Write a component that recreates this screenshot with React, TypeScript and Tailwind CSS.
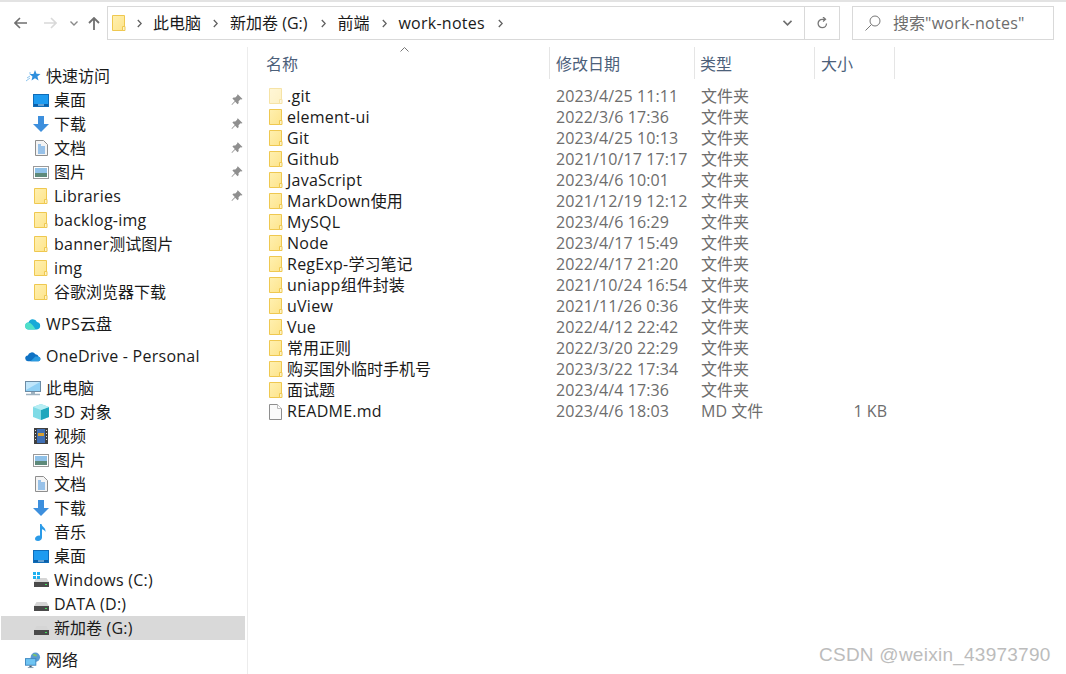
import React from "react";

const Folder = ({ pale = false }: { pale?: boolean }) => (
  <svg width="14" height="17" viewBox="0 0 14 17" className={pale ? "shrink-0 opacity-50" : "shrink-0"}>
    <defs>
      <linearGradient id="fg" x1="0" y1="0" x2="1" y2="1">
        <stop offset="0" stopColor="#fff0b0" />
        <stop offset="1" stopColor="#fde48c" />
      </linearGradient>
    </defs>
    <path d="M.5.5h12v15H.5z" fill="url(#fg)" stroke="#efc850" />
    <path d="M10.5 15.5v-4h2.500v4z" fill="#fdf3c8" stroke="#efc850" />
  </svg>
);

const Pin = () => (
  <svg width="12" height="12" viewBox="0 0 12 12" className="shrink-0">
    <path d="M7 .5l4.500 4.500-1.200.6-.8-.3-2 2 .2 1.800-1.100 1.100-2.400-2.400L1 11l-.5-.5 3.300-3.600L1.400 4.500l1.100-1.100 1.800.2 2-2-.3-.8z" fill="#8f8f8f" />
  </svg>
);

const Desktop = () => (
  <svg width="16" height="13" viewBox="0 0 16 13"><rect x=".5" y=".5" width="15" height="12" fill="#1e9bf0" stroke="#0f6cb8" /><rect x="1" y="10" width="14" height="2" fill="#0a5fa8" /><rect x="5" y="10.500" width="6" height="1" fill="#bfe3fb" /></svg>
);
const Down = () => (
  <svg width="16" height="16" viewBox="0 0 16 16"><path d="M5 0h6v8h5l-8 8-8-8h5z" fill="#3d8fdd" /></svg>
);
const Doc = () => (
  <svg width="13" height="16" viewBox="0 0 13 16"><path d="M.5.500h8l4 4v11H.5z" fill="#f4f4f4" stroke="#8e8e8e" /><path d="M3 5h3M3 7h7M3 9h7M3 11h7M3 13h7" stroke="#3d8fdd" /></svg>
);
const Pic = () => (
  <svg width="16" height="13" viewBox="0 0 16 13"><rect x=".5" y=".5" width="15" height="12" fill="#fff" stroke="#9a9a9a" /><rect x="2" y="2" width="12" height="5" fill="#8fc1e8" /><rect x="2" y="7" width="12" height="4" fill="#5e8a7a" /></svg>
);
const Star = () => (
  <svg width="15" height="14" viewBox="0 0 15 14"><path d="M9 1l1.500 3.800 4 .2-3.100 2.600 1.100 3.900L9 9.300 5.500 11.500l1-3.900L3.500 5h4z" fill="#2f8fdd" /><path d="M0 12l4-3M1 9l3-2M3 4h2" stroke="#8cc4ee" /></svg>
);
const Wps = () => (
  <svg width="16" height="12" viewBox="0 0 16 12"><path d="M4 11.500a3.500 3.500 0 0 1-.5-7A4.500 4.500 0 0 1 12 4a3.800 3.800 0 0 1 0 7.500z" fill="#17a9d8" /><path d="M4 11.500a3.500 3.500 0 0 1-.5-7c2 0 5 3 7 7z" fill="#4fe0c8" /></svg>
);
const OneDrive = () => (
  <svg width="17" height="11" viewBox="0 0 17 11"><path d="M3.500 10.500a3 3 0 0 1-.5-6A4.500 4.500 0 0 1 11 3a3.500 3.500 0 0 1 3.500 2.800A2.400 2.400 0 0 1 14.500 10.500z" fill="#0f72c4" /><path d="M6 10.500l5-5 3.500.3A2.400 2.400 0 0 1 14.500 10.500z" fill="#2a9be0" /></svg>
);
const Pc = () => (
  <svg width="16" height="15" viewBox="0 0 16 15"><rect x=".5" y=".5" width="15" height="10" fill="#8fd0f5" stroke="#6d8ca5" /><path d="M1 1h14L1 9z" fill="#c0e6fb" /><path d="M6 11h4v2H6z" fill="#9fb2c0" /><path d="M1 13.500h14" stroke="#9fb2c0" strokeWidth="1.500" /></svg>
);
const Cube = () => (
  <svg width="16" height="16" viewBox="0 0 16 16"><path d="M8 0l8 3v10l-8 3-8-3V3z" fill="#7fdbe6" /><path d="M8 6l8-3v10l-8 3z" fill="#1fa7bd" /><path d="M8 0l8 3-8 3-8-3z" fill="#b7eef4" /></svg>
);
const Video = () => (
  <svg width="14" height="16" viewBox="0 0 14 16"><rect width="14" height="16" fill="#404040" /><rect x="3" y="1" width="8" height="14" fill="#3f6fb5" /><path d="M4 5h6v3H4z" fill="#d8a030" /><path d="M1 2h1v1H1zM1 5h1v1H1zM1 8h1v1H1zM1 11h1v1H1zM12 2h1v1h-1zM12 5h1v1h-1zM12 8h1v1h-1zM12 11h1v1h-1z" fill="#ddd" /></svg>
);
const Music = () => (
  <svg width="12" height="17" viewBox="0 0 12 17"><path d="M5 0h1.500c.5 3 4.500 3.500 4 8-1-2-2.500-2.500-3.500-2.800V13.500C7 15.500 5 17 3 17c-1.800 0-3-1-3-2.300C0 13 2 11.500 4 11.500c.4 0 .7 0 1 .2z" fill="#2b9be8" /></svg>
);
const Drive = ({ win = false }: { win?: boolean }) => (
  <span className="relative flex h-4 w-4 items-end">
    {win && (
      <svg width="7" height="7" viewBox="0 0 7 7" className="absolute left-0 top-0"><path d="M0 0h3v3H0zM4 0h3v3H4zM0 4h3v3H0zM4 4h3v3H4z" fill="#1fb0f0" /></svg>
    )}
    <svg width="15" height="9" viewBox="0 0 15 9" className="ml-[1px] mb-[1px]"><path d="M2.500 0h10L15 4H0z" fill="#d5d5d5" /><rect y="4" width="15" height="5" fill="#4a4a4a" /><rect x="11" y="6" width="2" height="1" fill="#3fe05a" /></svg>
  </span>
);
const Net = () => (
  <svg width="17" height="17" viewBox="0 0 17 17"><circle cx="11" cy="5" r="5" fill="#5a9ad0" /><path d="M8 2c2-1 4 0 5 2-2 0-4 0-5-2z" fill="#7cc46a" /><rect x=".5" y="6.500" width="11" height="7" fill="#6fc4f2" stroke="#3d87c0" /><path d="M5 14h2v1.500H5zM3 16h6" stroke="#7f99ad" /></svg>
);

/* Latin runs are a little wider in the reference than the CJK runs allow for */
const Txt = ({ s }: { s: string }) => (
  <>
    {s.split(/([\x20-\x7e]+)/).filter(Boolean).map((run, i) =>
      /^[\x20-\x7e]+$/.test(run) ? (
        <span key={i} className="tracking-[0.25px]">{run}</span>
      ) : (
        <span key={i}>{run}</span>
      )
    )}
  </>
);

const rowCls = "flex h-6 items-center";

const Nav = ({ icon, label, pin = false, selected = false }: { icon: React.ReactNode; label: string; pin?: boolean; selected?: boolean }) => (
  <div className={`${rowCls} ml-px w-[244px] pl-8 pr-[2px] ${selected ? "bg-[#d9d9d9]" : ""}`}>
    <span className="flex w-4 shrink-0 items-center justify-center">{icon}</span>
    <span className="ml-[5px] flex-1 whitespace-nowrap"><Txt s={label} /></span>
    {pin && <Pin />}
  </div>
);

const Head = ({ icon, label, cls = "" }: { icon: React.ReactNode; label: string; cls?: string }) => (
  <div className={`${rowCls} ml-px pl-6 ${cls}`}>
    <span className="flex w-4 shrink-0 items-center justify-center">{icon}</span>
    <span className="ml-[5px] whitespace-nowrap"><Txt s={label} /></span>
  </div>
);

const files = [
  [".git", "2023/4/25 11:11"],
  ["element-ui", "2022/3/6 17:36"],
  ["Git", "2023/4/25 10:13"],
  ["Github", "2021/10/17 17:17"],
  ["JavaScript", "2023/4/6 10:01"],
  ["MarkDown使用", "2021/12/19 12:12"],
  ["MySQL", "2023/4/6 16:29"],
  ["Node", "2023/4/17 15:49"],
  ["RegExp-学习笔记", "2022/4/17 21:20"],
  ["uniapp组件封装", "2021/10/24 16:54"],
  ["uView", "2021/11/26 0:36"],
  ["Vue", "2022/4/12 22:42"],
  ["常用正则", "2022/3/20 22:29"],
  ["购买国外临时手机号", "2023/3/22 17:34"],
  ["面试题", "2023/4/4 17:36"],
];

const Sep = () => (
  <svg width="5" height="9" viewBox="0 0 5 9" className="shrink-0"><path d="M.8 1l3.400 3.500L.8 8" fill="none" stroke="#5f5f5f" strokeWidth="1.300" /></svg>
);

const FileRow = ({ icon, name, date, type, size }: { icon: React.ReactNode; name: string; date: string; type: string; size?: string }) => (
  <div className="flex h-[21px] items-center">
    <span className="flex w-[18px] shrink-0 items-center">{icon}</span>
    <span className="w-[269px] shrink-0 whitespace-nowrap text-[#1a1a1a]"><Txt s={name} /></span>
    <span className="w-[145px] shrink-0 whitespace-nowrap tracking-[0.1px] text-[#6d6d6d]">{date}</span>
    <span className="w-[120px] shrink-0 whitespace-nowrap text-[#6d6d6d]">{type}</span>
    <span className="w-[66px] shrink-0 whitespace-nowrap text-right text-[#6d6d6d]">{size}</span>
  </div>
);

export default function App() {
  return (
    <div className="relative h-[674px] w-[1066px] overflow-hidden bg-white text-[16px] leading-[21px] text-[#1a1a1a] [font-family:'Open_Sans','Noto_Sans_CJK_SC',sans-serif]">
      <div className="h-[2px] bg-[#e3e3e3]" />
      {/* toolbar */}
      <div className="flex h-[34px] mt-1 items-stretch">
        <div className="flex w-[107px] shrink-0 items-center pl-[14px]">
          <svg width="13" height="12" viewBox="0 0 13 12"><path d="M6 1L1 6l5 5M1 6h12" fill="none" stroke="#707070" strokeWidth="1.600" /></svg>
          <svg width="13" height="12" viewBox="0 0 13 12" className="ml-[17px]"><path d="M7 1l5 5-5 5M12 6H0" fill="none" stroke="#d9d9d9" strokeWidth="1.600" /></svg>
          <svg width="8" height="5" viewBox="0 0 8 5" className="ml-[13px]"><path d="M.5.500L4 4 7.500.5" fill="none" stroke="#8a8a8a" strokeWidth="1.400" /></svg>
          <svg width="12" height="13" viewBox="0 0 12 13" className="ml-[10px]"><path d="M1 6l5-5 5 5M6 1v12" fill="none" stroke="#707070" strokeWidth="1.800" /></svg>
        </div>
        <div className="flex w-[733px] shrink-0 items-center border border-[#d9d9d9]">
          <span className="ml-1 flex w-[13px] shrink-0"><Folder /></span>
          <span className="ml-[12px]"><Sep /></span>
          <span className="ml-[11px] whitespace-nowrap">此电脑</span>
          <span className="ml-[12px]"><Sep /></span>
          <span className="ml-[12px] whitespace-nowrap">新加卷 (G:)</span>
          <span className="ml-[14px]"><Sep /></span>
          <span className="ml-[11px] whitespace-nowrap">前端</span>
          <span className="ml-[13px]"><Sep /></span>
          <span className="ml-[11px] whitespace-nowrap"><Txt s="work-notes" /></span>
          <span className="ml-[13px]"><Sep /></span>
          <span className="flex-1" />
          <span className="flex w-[34px] items-center justify-center self-stretch border-r border-[#d9d9d9]">
            <svg width="9" height="6" viewBox="0 0 9 6"><path d="M.5.800l4 4 4-4" fill="none" stroke="#6f6f6f" strokeWidth="1.600" /></svg>
          </span>
          <span className="flex w-[34px] items-center justify-center">
            <svg width="11" height="12" viewBox="0 0 11 12"><path d="M9.500 6.500A4.200 4.200 0 1 1 5.300 2.300H8M6 0l2.500 2.300L6 4.500" fill="none" stroke="#777" strokeWidth="1.300" /></svg>
          </span>
        </div>
        <div className="ml-3 flex w-[202px] shrink-0 items-center border border-[#d9d9d9] pl-3 text-[#6d6d6d]">
          <svg width="16" height="16" viewBox="0 0 16 16"><circle cx="10" cy="6" r="5" fill="none" stroke="#777" /><path d="M6.500 9.500L.5 15.500" stroke="#777" /></svg>
          <span className="ml-3 whitespace-nowrap"><Txt s={'搜索"work-notes"'} /></span>
        </div>
      </div>
      {/* body */}
      <div className="mt-[7px] flex">
        <aside className="h-[627px] w-[248px] shrink-0 border-r border-[#ececec] pt-[17px]">
          <Head icon={<Star />} label="快速访问" />
          <Nav icon={<Desktop />} label="桌面" pin />
          <Nav icon={<Down />} label="下载" pin />
          <Nav icon={<Doc />} label="文档" pin />
          <Nav icon={<Pic />} label="图片" pin />
          <Nav icon={<Folder />} label="Libraries" pin />
          <Nav icon={<Folder />} label="backlog-img" />
          <Nav icon={<Folder />} label="banner测试图片" />
          <Nav icon={<Folder />} label="img" />
          <Nav icon={<Folder />} label="谷歌浏览器下载" />
          <Head icon={<Wps />} label="WPS云盘" cls="mt-2" />
          <Head icon={<OneDrive />} label="OneDrive - Personal" cls="mt-2" />
          <Head icon={<Pc />} label="此电脑" cls="mt-2" />
          <Nav icon={<Cube />} label="3D 对象" />
          <Nav icon={<Video />} label="视频" />
          <Nav icon={<Pic />} label="图片" />
          <Nav icon={<Doc />} label="文档" />
          <Nav icon={<Down />} label="下载" />
          <Nav icon={<Music />} label="音乐" />
          <Nav icon={<Desktop />} label="桌面" />
          <Nav icon={<Drive win />} label="Windows (C:)" />
          <Nav icon={<Drive />} label="DATA (D:)" />
          <Nav icon={<Drive />} label="新加卷 (G:)" selected />
          <Head icon={<Net />} label="网络" cls="mt-2" />
        </aside>
        <main className="flex-1">
          <div className="relative flex h-8 items-center pl-[18px] pt-[2px] text-[#4c607a]">
            <span className="w-[283px] shrink-0">名称</span>
            <span className="-mt-[2px] h-8 w-px shrink-0 bg-[#e5e5e5]" />
            <span className="w-[144px] shrink-0 pl-[6px]">修改日期</span>
            <span className="-mt-[2px] h-8 w-px shrink-0 bg-[#e5e5e5]" />
            <span className="w-[119px] shrink-0 pl-[5px]">类型</span>
            <span className="-mt-[2px] h-8 w-px shrink-0 bg-[#e5e5e5]" />
            <span className="w-[79px] shrink-0 pl-[6px]">大小</span>
            <span className="-mt-[2px] h-8 w-px shrink-0 bg-[#e5e5e5]" />
            <svg width="9" height="5" viewBox="0 0 9 5" className="absolute left-[152px] top-0"><path d="M.5 4.500l4-4 4 4" fill="none" stroke="#777" /></svg>
          </div>
          <div className="pl-[21px] pt-[7px]">
            {files.map(([name, date], i) => (
              <FileRow key={name} icon={<Folder pale={i === 0} />} name={name} date={date} type="文件夹" />
            ))}
            <FileRow
              icon={
                <svg width="13" height="16" viewBox="0 0 13 16"><path d="M.5.500h8l4 4v11H.5z" fill="#fafafa" stroke="#8e8e8e" /><path d="M8.500.500v4h4" fill="#fff" stroke="#bbb" /></svg>
              }
              name="README.md"
              date="2023/4/6 18:03"
              type="MD 文件"
              size="1 KB"
            />
          </div>
        </main>
      </div>
      <span className="absolute left-[819px] top-[643px] whitespace-nowrap text-[19px] leading-[24px] tracking-[0.25px] text-[#bcbcbc] [font-family:'Liberation_Sans',sans-serif]">
        CSDN @weixin_43973790
      </span>
    </div>
  );
}
